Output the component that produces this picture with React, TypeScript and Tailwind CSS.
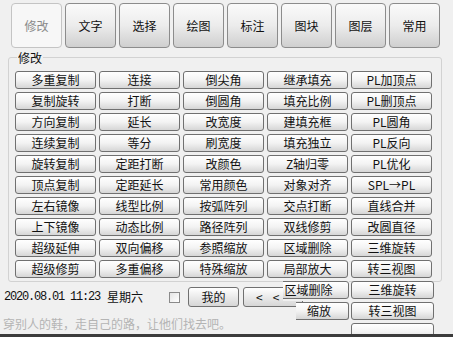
import React from 'react'

const tabs = ['修改', '文字', '选择', '绘图', '标注', '图块', '图层', '常用']

const rows: string[][] = [
  ['多重复制', '连接', '倒尖角', '继承填充', 'PL加顶点'],
  ['复制旋转', '打断', '倒圆角', '填充比例', 'PL删顶点'],
  ['方向复制', '延长', '改宽度', '建填充框', 'PL圆角'],
  ['连续复制', '等分', '刷宽度', '填充独立', 'PL反向'],
  ['旋转复制', '定距打断', '改颜色', 'Z轴归零', 'PL优化'],
  ['顶点复制', '定距延长', '常用颜色', '对象对齐', 'SPL→PL'],
  ['左右镜像', '线型比例', '按弧阵列', '交点打断', '直线合并'],
  ['上下镜像', '动态比例', '路径阵列', '双线修剪', '改圆直径'],
  ['超级延伸', '双向偏移', '参照缩放', '区域删除', '三维旋转'],
  ['超级修剪', '多重偏移', '特殊缩放', '局部放大', '转三视图'],
]

const font = { fontFamily: '"Noto Sans CJK SC", "Noto Sans", sans-serif' }

function Btn({ label, className = '' }: { label: string; className?: string }) {
  return (
    <div
      className={`h-[18px] flex items-center justify-center border border-[#707070] rounded-[3px] bg-gradient-to-b from-white via-[#f3f3f3] to-[#d6d6d6] text-[12px] leading-none text-[#111] whitespace-nowrap ${className}`}
    >
      {label}
    </div>
  )
}

export default function App() {
  return (
    <div
      className="relative w-[453px] h-[337px] overflow-hidden bg-[#f0f0f0] border-b-[3px] border-[#3c3c3c]"
      style={font}
    >
      {/* Tabs */}
      <div className="flex gap-[3px] pt-[3px] pl-[11px]">
        {tabs.map((t, i) => (
          <div
            key={t}
            className={
              i === 0
                ? 'w-[51px] h-[45px] flex items-center justify-center rounded-[4px] border border-[#c4c4c4] bg-[#f7f7f7] text-[12px] text-[#8a8a8a]'
                : 'w-[51px] h-[45px] flex items-center justify-center rounded-[4px] border border-[#8c8c8c] bg-gradient-to-b from-[#fafafa] via-[#ececec] to-[#cfcfcf] text-[12px] text-[#111]'
            }
          >
            {t}
          </div>
        ))}
      </div>

      {/* Group box */}
      <div className="relative mt-[9px] ml-[8px] w-[434px] h-[225px] border border-[#d2d2d2] rounded-[3px] pt-[13px] pl-[6px]">
        <span className="absolute -top-[6px] left-[8px] px-[1px] bg-[#f0f0f0] text-[12px] leading-[12px] text-[#111]">
          修改
        </span>
        <div className="grid grid-cols-[repeat(5,81px)] gap-x-[3px] gap-y-[3px]">
          {rows.flat().map((l, i) => (
            <Btn key={i} label={l} />
          ))}
        </div>
      </div>

      {/* Bottom status */}
      <div className="flex items-center h-[22px] mt-[4px] pl-[4px]">
        <span
          className="text-[12px] text-[#111] tracking-[-1.2px]"
          style={{ fontFamily: '"Liberation Mono", monospace' }}
        >
          2020.08.01 11:23
        </span>
        <span className="ml-[7px] text-[12px] text-[#111]">星期六</span>
        <div className="ml-[26px] w-[11px] h-[11px] border border-[#8a8a8a] bg-gradient-to-br from-[#e4e4e4] to-white" />
        <div className="ml-[8px] w-[51px] h-[20px] flex items-center justify-center border border-[#707070] rounded-[3px] bg-gradient-to-b from-white to-[#d6d6d6] text-[12px] text-[#111]">
          我的
        </div>
        <div className="ml-[4px] w-[60px] h-[20px] flex items-center gap-[10px] pl-[12px] border border-[#707070] rounded-[3px] bg-gradient-to-b from-white to-[#d6d6d6] text-[12px] text-[#111]">
          <span>&lt;</span>
          <span>&lt;</span>
        </div>
      </div>
      <div className="mt-[9px] pl-[3px] text-[12px] leading-[14px] text-[#b4b4b4] whitespace-nowrap">
        穿别人的鞋，走自己的路，让他们找去吧。
      </div>

      {/* Redraw ghost over the bottom right */}
      <div className="absolute left-[283px] top-[281px] w-[66px] h-[20px] overflow-hidden bg-[#f0f0f0]">
        <Btn label="区域删除" className="w-[81px] -ml-[15px] justify-center" />
      </div>
      <Btn label="三维旋转" className="absolute left-[351px] top-[281px] w-[83px]" />
      <div className="absolute left-[296px] top-[302px] w-[53px] h-[20px] bg-[#f0f0f0]">
        <div className="h-[18px] flex items-center justify-end pr-[17px] border-y border-r border-[#707070] rounded-r-[3px] bg-gradient-to-b from-white via-[#f3f3f3] to-[#d6d6d6] text-[12px] leading-none text-[#111]">
          缩放
        </div>
      </div>
      <Btn label="转三视图" className="absolute left-[351px] top-[302px] w-[83px]" />
      <Btn label="" className="absolute left-[351px] top-[323px] w-[83px]" />
    </div>
  )
}
